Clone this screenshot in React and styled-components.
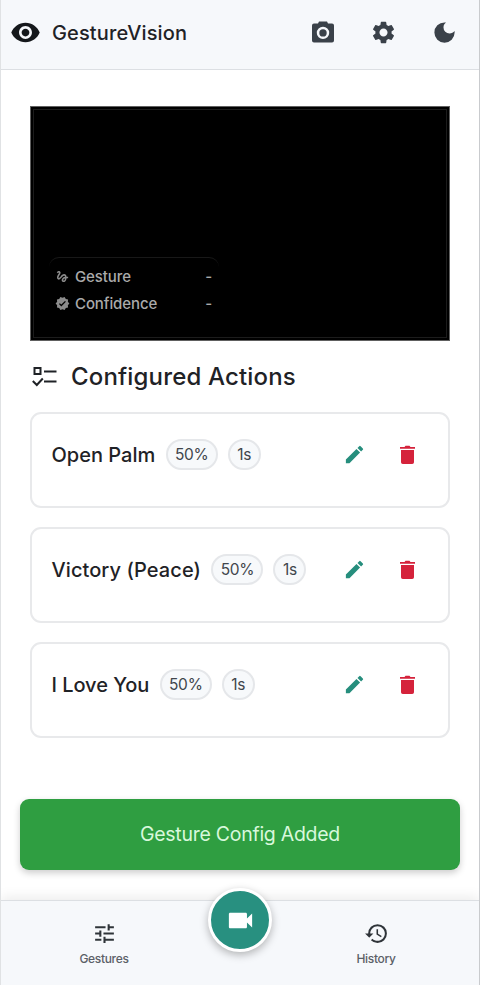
import React from "react";
import styled, { createGlobalStyle } from "styled-components";
import {
  MdVisibility,
  MdSettings,
  MdGesture,
  MdVerified,
  MdEdit,
  MdTune,
  MdHistory,
  MdVideocam,
} from "react-icons/md";

const GlobalStyle = createGlobalStyle`
  * { box-sizing: border-box; }
  body { margin: 0; background: #fff; font-family: Inter, "Liberation Sans", sans-serif; color: #1f2226; }
  button { font: inherit; color: inherit; border: 0; padding: 0; background: none; display: flex; align-items: center; justify-content: center; }
`;

const Page = styled.div`
  height: 985px;
  display: flex;
  flex-direction: column;
  overflow: hidden;
  border-left: 1px solid #e0e2e4;
  border-right: 1px solid #c9cbce;
`;

const Header = styled.header`
  height: 70px;
  flex: none;
  display: flex;
  align-items: center;
  padding: 0 21px 5px 9px;
  background: #f6f8fb;
  border-bottom: 1px solid #dcdfe3;
`;

const Brand = styled.div`
  display: flex;
  align-items: center;
  gap: 11px;
  flex: 1;
  font-size: 20px;
  line-height: 26px;
  font-weight: 500;
  letter-spacing: 0.13px;
  span { padding-top: 1px; }
  svg { width: 31px; height: 31px; color: #15181b; }
`;

const HeaderActions = styled.div`
  display: flex;
  gap: 34px;
  color: #3a4149;
  svg { width: 27px; height: 27px; }
`;

const Main = styled.main`
  flex: 1;
  display: flex;
  flex-direction: column;
  padding: 36px 29px 0;
`;

const Video = styled.section`
  height: 235px;
  flex: none;
  display: flex;
  align-items: flex-end;
  padding: 0 0 18px 18px;
  background: #000;
  border: 1px solid #606060;
  box-shadow: inset 0 0 0 2px #000, inset 0 0 0 3px #1c1c1c;
`;

const Readout = styled.div`
  width: 170px;
  height: 65px;
  padding: 5px 7px 3px 6px;
  border-top: 1px solid #181818;
  border-radius: 10px;
  color: #aaa;
`;

const ReadoutRow = styled.div`
  height: 27px;
  display: flex;
  align-items: center;
  gap: 5px;
  font-size: 15px;
  font-weight: 500;
  letter-spacing: -0.1px;
  svg { width: 15px; height: 15px; color: #8c8c8c; }
  span:last-child { margin-left: auto; }
`;

const Heading = styled.h2`
  display: flex;
  align-items: center;
  gap: 13px;
  height: 30px;
  margin: 20px 0 21px 2px;
  font-size: 24px;
  font-weight: 500;
  letter-spacing: 0.16px;
  svg { width: 26px; height: 24px; }
`;

const List = styled.div`
  display: flex;
  flex-direction: column;
  gap: 19px;
`;

const Card = styled.article`
  height: 96px;
  display: flex;
  align-items: center;
  padding: 0 29px 12px 19.5px;
  border: 2px solid #e8e9eb;
  border-radius: 11px;
`;

const CardTitle = styled.h3`
  margin: 1px 10.5px 0 0;
  font-size: 20px;
  line-height: 24px;
  font-weight: 500;
  letter-spacing: ${(p) => p.$tracking}px;
`;

const Pill = styled.span`
  width: ${(p) => p.$width}px;
  height: 31px;
  display: flex;
  align-items: center;
  justify-content: center;
  margin-right: 10px;
  border: 2px solid #e5e7ea;
  border-radius: 16px;
  background: #f7f9fb;
  color: #41464c;
  font-size: 15.5px;
  letter-spacing: -0.25px;
`;

const CardActions = styled.div`
  display: flex;
  gap: 30px;
  margin-left: auto;
  svg { width: 23px; height: 23px; }
`;

const EditButton = styled.button`
  && { color: #268e7d; }
`;

const DeleteButton = styled.button`
  && { color: #d5223b; }
`;

const Toast = styled.div`
  height: 71px;
  flex: none;
  display: flex;
  align-items: center;
  justify-content: center;
  margin: 0 19px 30px;
  padding-bottom: 2px;
  border-radius: 9px;
  background: #2f9e41;
  color: #d8f8dc;
  font-size: 19.5px;
  letter-spacing: -0.27px;
  box-shadow: 0 3px 7px rgba(0, 0, 0, 0.2);
`;

const Nav = styled.nav`
  height: 85px;
  flex: none;
  display: grid;
  grid-template-columns: 206px 66px 206px;
  background: #f6f8fb;
  border-top: 1px solid #dcdfe3;
  box-shadow: 0 -3px 12px rgba(0, 0, 0, 0.08);
`;

const NavItem = styled.button`
  && {
    flex-direction: column;
    justify-content: flex-start;
    gap: 5px;
    padding-top: 20px;
    color: #5b6067;
    font-size: 12px;
    line-height: 15px;
    font-weight: 500;
    letter-spacing: -0.33px;
  }
  svg { width: 25px; height: 25px; color: #2f3439; }
`;

const CameraButton = styled.button`
  && {
    width: 64px;
    height: 64px;
    margin: -13px auto 0;
    border: 3px solid #fff;
    border-radius: 50%;
    background: #289080;
    color: #fff;
    box-shadow: 0 3px 9px rgba(0, 0, 0, 0.28);
  }
  svg { width: 31px; height: 31px; }
`;

const CameraIcon = () => (
  <svg viewBox="0 0 27 27" fill="currentColor">
    <path fillRule="evenodd" d="M10 2.5h8l1 2h4q2 0 2 2v15q0 2-2 2H5q-2 0-2-2v-15q0-2 2-2h4zM14 7.7a6.2 6.2 0 1 0 0 12.4a6.2 6.2 0 1 0 0-12.4z" />
    <circle cx="14" cy="13.9" r="3.7" />
  </svg>
);

const MoonIcon = () => (
  <svg viewBox="0 0 24 24" fill="currentColor">
    <path d="M12 21q-3.75 0-6.375-2.625T3 12t2.625-6.375T12 3q.35 0 .688.025t.662.075q-1.025.725-1.638 1.888T11.1 7.5q0 2.25 1.575 3.825T16.5 12.9q1.375 0 2.525-.613T20.9 10.65q.05.325.075.662T21 12q0 3.75-2.625 6.375T12 21z" />
  </svg>
);

const TrashIcon = () => (
  <svg viewBox="0 0 23 23" fill="currentColor">
    <path d="M4 4h4.5l1-1.2h4l1 1.2H19v1.8H4zM5 7h13v12.2q0 1.8-1.8 1.8H6.8Q5 21 5 19.2z" />
  </svg>
);

const ChecklistIcon = () => (
  <svg viewBox="0 0 26 24" fill="none" stroke="currentColor" strokeWidth="2">
    <path d="M2.5 4h6v6h-6zM12 7.5h12.5M12 17.5h12.5M.8 17l4 4 6-6.5" />
  </svg>
);

const ACTIONS = [
  { name: "Open Palm", tracking: 0 },
  { name: "Victory (Peace)", tracking: 0.08 },
  { name: "I Love You", tracking: -0.05 },
];

export default function App() {
  return (
    <Page>
      <GlobalStyle />
      <Header>
        <Brand><MdVisibility /><span>GestureVision</span></Brand>
        <HeaderActions>
          <button aria-label="Camera"><CameraIcon /></button>
          <button aria-label="Settings"><MdSettings /></button>
          <button aria-label="Dark mode"><MoonIcon /></button>
        </HeaderActions>
      </Header>
      <Main>
        <Video>
          <Readout>
            <ReadoutRow><MdGesture /><span>Gesture</span><span>-</span></ReadoutRow>
            <ReadoutRow><MdVerified /><span>Confidence</span><span>-</span></ReadoutRow>
          </Readout>
        </Video>
        <Heading><ChecklistIcon />Configured Actions</Heading>
        <List>
          {ACTIONS.map((a) => (
            <Card key={a.name}>
              <CardTitle $tracking={a.tracking}>{a.name}</CardTitle>
              <Pill $width={52}>50%</Pill>
              <Pill $width={33}>1s</Pill>
              <CardActions>
                <EditButton aria-label="Edit"><MdEdit /></EditButton>
                <DeleteButton aria-label="Delete"><TrashIcon /></DeleteButton>
              </CardActions>
            </Card>
          ))}
        </List>
      </Main>
      <Toast>Gesture Config Added</Toast>
      <Nav>
        <NavItem><MdTune />Gestures</NavItem>
        <CameraButton aria-label="Start camera"><MdVideocam /></CameraButton>
        <NavItem><MdHistory />History</NavItem>
      </Nav>
    </Page>
  );
}
